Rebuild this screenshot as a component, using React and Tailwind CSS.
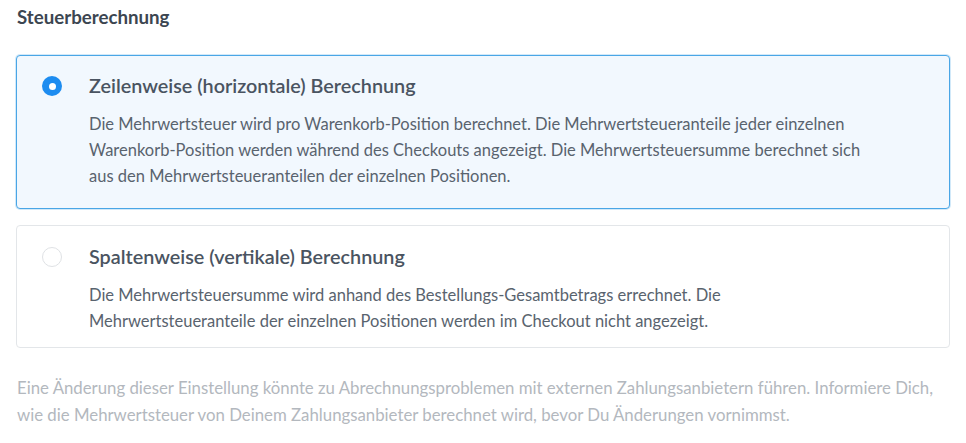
import React from "react";

function Radio({ checked }) {
  return checked ? (
    <span className="mt-[4px] flex h-[20px] w-[20px] shrink-0 items-center justify-center rounded-full bg-[#1d8cf0]">
      <span className="h-[7px] w-[7px] rounded-full bg-white" />
    </span>
  ) : (
    <span className="mt-[4px] block h-[20px] w-[20px] shrink-0 rounded-full border border-[#dfe2e5] bg-white" />
  );
}

function Option({ checked, title, lines, className }) {
  return (
    <div
      className={
        "flex gap-[27px] rounded-[4px] border pl-[25px] pr-6 " +
        (checked
          ? "border-[#4aa6e6] bg-[#f2f8fe] shadow-[0_0_0_1px_rgba(74,166,230,0.25)] "
          : "border-[#e3e6e9] bg-white ") +
        className
      }
    >
      <Radio checked={checked} />
      <div>
        <div className="text-[19.8px] font-semibold leading-[26px] text-[#4a5461]">{title}</div>
        <p className="mt-[13px] text-[16.5px] leading-[26px] text-[#59636e]">
          {lines.map((l, i) => (
            <span key={i} className="block whitespace-nowrap">
              {l}
            </span>
          ))}
        </p>
      </div>
    </div>
  );
}

export default function App() {
  return (
    <div className="h-[443px] w-[966px] bg-white pl-4 pr-4 pt-[4px] font-['Lato',sans-serif]">
      <h2 className="pl-[1px] text-[18.7px] font-bold leading-[26px] text-[#3c4651]">Steuerberechnung</h2>
      <div className="mt-[25px] flex w-[934px] flex-col gap-4">
        <Option
          checked
          className="pb-[19px] pt-[16px]"
          title="Zeilenweise (horizontale) Berechnung"
          lines={[
            "Die Mehrwertsteuer wird pro Warenkorb-Position berechnet. Die Mehrwertsteueranteile jeder einzelnen",
            "Warenkorb-Position werden während des Checkouts angezeigt. Die Mehrwertsteuersumme berechnet sich",
            "aus den Mehrwertsteueranteilen der einzelnen Positionen.",
          ]}
        />
        <Option
          className="pb-[13px] pt-[17px]"
          title="Spaltenweise (vertikale) Berechnung"
          lines={[
            "Die Mehrwertsteuersumme wird anhand des Bestellungs-Gesamtbetrags errechnet. Die",
            "Mehrwertsteueranteile der einzelnen Positionen werden im Checkout nicht angezeigt.",
          ]}
        />
      </div>
      <p className="mt-[26px] pl-[1px] text-[16.8px] leading-[27px] text-[#b3b8be]">
        <span className="block whitespace-nowrap">
          Eine Änderung dieser Einstellung könnte zu Abrechnungsproblemen mit externen Zahlungsanbietern führen. Informiere Dich,
        </span>
        <span className="block whitespace-nowrap">
          wie die Mehrwertsteuer von Deinem Zahlungsanbieter berechnet wird, bevor Du Änderungen vornimmst.
        </span>
      </p>
    </div>
  );
}
